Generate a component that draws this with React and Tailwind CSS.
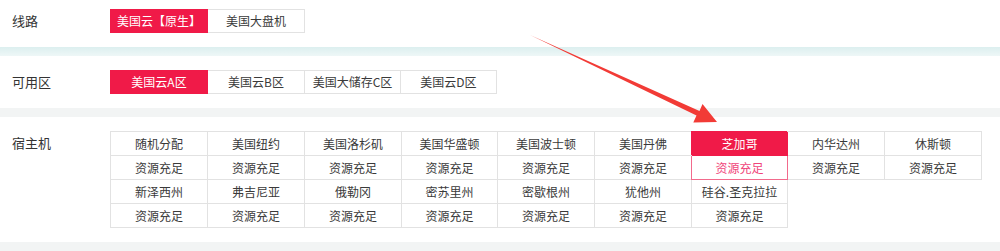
import React from "react"

const hosts1 = ["随机分配", "美国纽约", "美国洛杉矶", "美国华盛顿", "美国波士顿", "美国丹佛", "芝加哥", "内华达州", "休斯顿"]
const hosts2 = ["新泽西州", "弗吉尼亚", "俄勒冈", "密苏里州", "密歇根州", "犹他州", "硅谷.圣克拉拉"]

const font = { fontFamily: '"Noto Sans CJK SC", "Liberation Sans", sans-serif' }

function Label({ children }) {
    return <div className="w-[110px] pl-3 text-[13px] text-[#333] leading-[24px]">{children}</div>
}

function Tab({ text, active, w }) {
    return (
        <div
            className={
                "h-[24px] flex items-center justify-center text-[12px] border -ml-px first:ml-0 " +
                (active ? "bg-[#f01a48] border-[#f01a48] text-white relative z-10" : "bg-white border-[#e2e2e2] text-[#3a3a3a]")
            }
            style={{ width: w }}
        >
            {text}
        </div>
    )
}

function Cell({ text, kind }) {
    if (kind === "empty") return <div />
    if (kind === "on") {
        return (
            <div className="h-[24px] flex items-center justify-center text-[12px] bg-[#f01a48] text-white border-r border-b border-[#f01a48] relative z-10 shadow-[-1px_-1px_0_#f01a48]">
                {text}
            </div>
        )
    }
    if (kind === "sel") {
        return (
            <div className="h-[24px] flex items-center justify-center text-[12px] bg-white text-[#f0457a] border-r border-b border-[#f26a8c] relative z-10 shadow-[-1px_0_0_#f26a8c]">
                {text}
            </div>
        )
    }
    return (
        <div className="h-[24px] flex items-center justify-center text-[12px] text-[#3a3a3a] border-r border-b border-[#e2e2e2]">
            {text}
        </div>
    )
}

export default function App() {
    return (
        <div className="relative w-[1000px] h-[251px] bg-white overflow-hidden" style={font}>
            {/* 线路 */}
            <div className="flex items-start pt-[9px] h-[47px]">
                <Label>线路</Label>
                <div className="flex">
                    <Tab text="美国云【原生】" active w={98} />
                    <Tab text="美国大盘机" w={98} />
                </div>
            </div>
            <div className="h-[9px] bg-gradient-to-b from-[#dcefef] to-[#eef7f7]" />

            {/* 可用区 */}
            <div className="flex items-start pt-[14px] h-[52px]">
                <Label>可用区</Label>
                <div className="flex">
                    <Tab text="美国云A区" active w={98} />
                    <Tab text="美国云B区" w={98} />
                    <Tab text="美国大储存C区" w={97} />
                    <Tab text="美国云D区" w={97} />
                </div>
            </div>
            <div className="h-[9px] bg-[#f2f4f4]" />

            {/* 宿主机 */}
            <div className="flex items-start pt-[14px] h-[125px]">
                <Label>宿主机</Label>
                <div className="grid grid-cols-[97px_97px_97px_96px_97px_97px_96px_97px_97px] border-l border-t border-[#e2e2e2]">
                    {hosts1.map((h, i) => (
                        <Cell key={"a" + i} text={h} kind={i === 6 ? "on" : ""} />
                    ))}
                    {hosts1.map((h, i) => (
                        <Cell key={"b" + i} text="资源充足" kind={i === 6 ? "sel" : ""} />
                    ))}
                    {[...hosts2, null, null].map((h, i) => (
                        <Cell key={"c" + i} text={h} kind={h ? "" : "empty"} />
                    ))}
                    {[...hosts2, null, null].map((h, i) => (
                        <Cell key={"d" + i} text="资源充足" kind={h ? "" : "empty"} />
                    ))}
                </div>
            </div>
            <div className="h-[9px] bg-[#f2f4f4]" />

            {/* annotation arrow */}
            <svg className="absolute left-0 top-0 pointer-events-none z-20" width="1000" height="251">
                <polygon
                    points="530,35 699.5,110.9 702.5,104.1 717,122 693.3,122.4 696.5,115.5"
                    fill="#f23b36"
                />
            </svg>
        </div>
    )
}
